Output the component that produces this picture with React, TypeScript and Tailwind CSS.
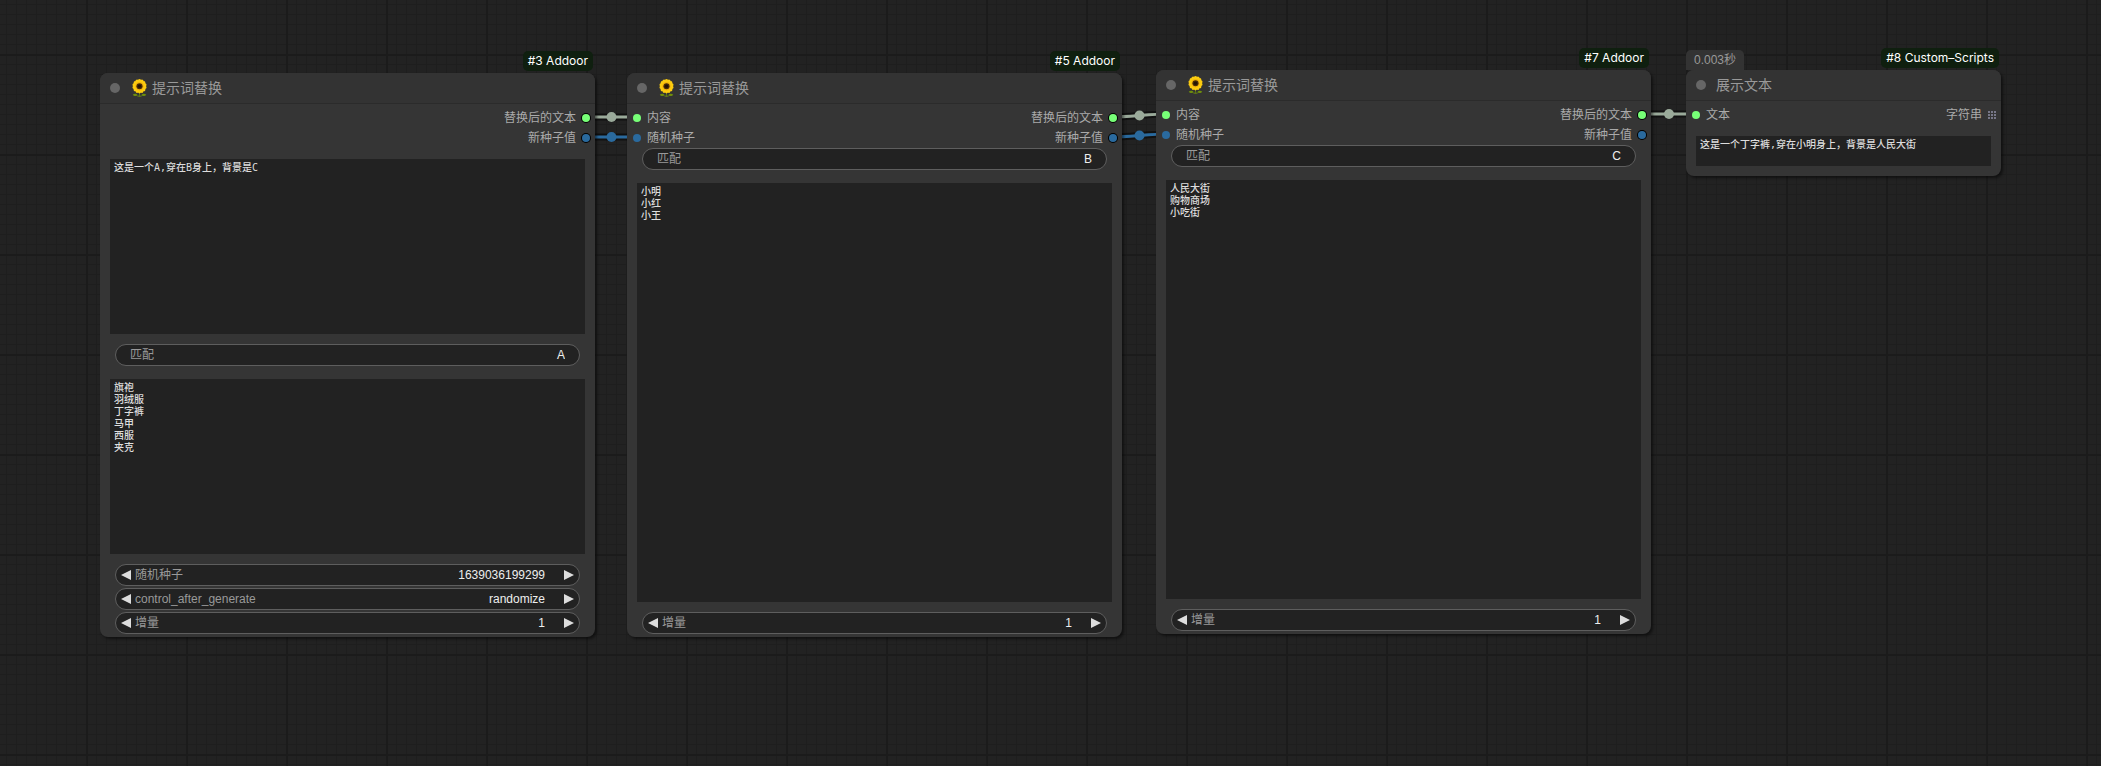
import { useState, type ReactNode } from "react";

const SANS = "font-['Liberation_Sans','Noto_Sans_CJK_SC',sans-serif]";

function Sunflower() {
  const petals = Array.from({ length: 14 }, (_, i) => (i * 360) / 14);
  return (
    <svg viewBox="0 0 32 40" className="h-[18px] w-[15px] shrink-0" aria-hidden="true">
      <path d="M15 27h2v10h-2z" fill="#5f7a12" />
      <path d="M1 35c3-3 8-3 11 1-3 3-9 2-11-1zM31 35c-3-3-8-3-11 1 3 3 9 2 11-1zM10 38c3-2 9-2 12 0-3 2-9 2-12 0z" fill="#6f8f0c" />
      {petals.map((a) => (
        <ellipse key={a} cx="16" cy="5.5" rx="3.9" ry="5.5" fill="#fccc10" transform={`rotate(${a} 16 16)`} />
      ))}
      <circle cx="16" cy="16" r="9.5" fill="#f5b60a" />
      <circle cx="16" cy="16" r="6.8" fill="#4a2c08" />
      <circle cx="16" cy="16" r="4" fill="#241404" />
    </svg>
  );
}

function IdBadge({ children }: { children: ReactNode }) {
  return (
    <span className="absolute right-[2px] bottom-full mb-[2px] rounded-[5px] bg-[#0f1f0f] px-[5px] font-[Inter,sans-serif] text-[12px] leading-[20px] whitespace-nowrap text-white">
      {children}
    </span>
  );
}

type Slot = { name: string; color: "green" | "blue" | "grid" };

function Port({ color, output }: { color: Slot["color"]; output?: boolean }) {
  if (color === "grid") {
    return (
      <svg viewBox="0 0 8 8" className="size-[8px]" fill="#778" aria-hidden="true">
        {[0, 3, 6].map((y) => [0, 3, 6].map((x) => <rect key={`${x}-${y}`} x={x} y={y} width="2" height="2" />))}
      </svg>
    );
  }
  const fill = color === "green" ? "bg-[#77ff77]" : "bg-[#2a6a9e]";
  return (
    <span className={`size-[8px] rounded-full ${fill} ${output ? "ring-1 ring-black" : ""}`} />
  );
}

function Slots({ inputs, outputs }: { inputs: Slot[]; outputs: Slot[] }) {
  return (
    <div className="flex justify-between pt-[4px] pr-[5px] pl-[6px] text-[12px] leading-[20px] text-[#aaa]">
      <ul>
        {inputs.map((s) => (
          <li key={s.name} className="flex items-center gap-[6px]">
            <Port color={s.color} />
            {s.name}
          </li>
        ))}
      </ul>
      <ul>
        {outputs.map((s) => (
          <li key={s.name} className="flex items-center justify-end gap-[6px]">
            {s.name}
            <Port color={s.color} output />
          </li>
        ))}
      </ul>
    </div>
  );
}

function Node({
  place,
  title,
  icon,
  badge,
  timing,
  children,
}: {
  place: string;
  title: string;
  icon?: boolean;
  badge: string;
  timing?: string;
  children: ReactNode;
}) {
  return (
    <section className={`absolute rounded-[8px] bg-[#353535] shadow-[2px_2px_3px_rgba(0,0,0,0.5)] ${place}`}>
      {timing && (
        <span className="absolute bottom-full left-0 rounded-t-[5px] bg-[#333] px-[8px] text-[12px] leading-[20px] whitespace-nowrap text-[#999]">
          {timing}
        </span>
      )}
      <IdBadge>{badge}</IdBadge>
      <header className="flex h-[31px] items-center rounded-t-[8px] border-b border-[#2b2b2b] bg-[#333] pl-[10px]">
        <span className="size-[10px] rounded-full bg-[#666]" />
        <h2 className="flex items-center gap-[5px] pl-[10px] text-[14px] leading-[20px] text-[#999]">
          {icon && (
            <span className="pl-[2px]">
              <Sunflower />
            </span>
          )}
          {title}
        </h2>
      </header>
      {children}
    </section>
  );
}

function TextBlock({ label, text, size }: { label: string; text: string; size: string }) {
  const [value, setValue] = useState(text);
  return (
    <div className="px-[10px]">
      <textarea
        aria-label={label}
        value={value}
        onChange={(e) => setValue(e.target.value)}
        spellCheck={false}
        className={`block w-full resize-none overflow-hidden bg-[#222] px-[4px] py-[3px] font-['DejaVu_Sans_Mono','Noto_Sans_CJK_SC',monospace] text-[10px] leading-[12px] font-medium text-[#ddd] outline-none ${size}`}
      />
    </div>
  );
}

const PILL = "mx-[15px] flex h-[22px] items-center rounded-full border border-[#5e5e5e] bg-[#222] text-[12px] leading-[20px]";

function TextPill({ id, label, text }: { id: string; label: string; text: string }) {
  const [value, setValue] = useState(text);
  return (
    <div className={`${PILL} px-[14px]`}>
      <label htmlFor={id} className="shrink-0 text-[#999]">
        {label}
      </label>
      <input
        id={id}
        value={value}
        onChange={(e) => setValue(e.target.value)}
        className="min-w-0 flex-1 bg-transparent text-right text-[#eee] outline-none"
      />
    </div>
  );
}

function Arrow({ label, d, onClick }: { label: string; d: string; onClick: () => void }) {
  return (
    <button type="button" aria-label={label} onClick={onClick} className="shrink-0">
      <svg viewBox="0 0 10 10" className="size-[10px]" fill="#ddd" aria-hidden="true">
        <path d={d} />
      </svg>
    </button>
  );
}

function StepPill({ id, label, start, options }: { id: string; label: string; start: string; options?: string[] }) {
  const [value, setValue] = useState(start);
  const step = (by: number) => {
    if (options) {
      const next = options[options.indexOf(value) + by];
      if (next) setValue(next);
    } else {
      setValue(String(Number(value) + by));
    }
  };
  return (
    <div className={`${PILL} px-[5px]`}>
      <Arrow label={`${label} -`} d="M10 0v10L0 5z" onClick={() => step(-1)} />
      <label htmlFor={id} className="shrink-0 pl-[4px] text-[#999]">
        {label}
      </label>
      {options ? (
        <select
          id={id}
          value={value}
          onChange={(e) => setValue(e.target.value)}
          className="min-w-0 flex-1 appearance-none bg-transparent pr-[19px] text-right text-[#eee] outline-none [text-align-last:right]"
        >
          {options.map((o) => (
            <option key={o}>{o}</option>
          ))}
        </select>
      ) : (
        <input
          id={id}
          value={value}
          inputMode="numeric"
          onChange={(e) => setValue(e.target.value)}
          className="min-w-0 flex-1 bg-transparent pr-[19px] text-right text-[#eee] outline-none"
        />
      )}
      <Arrow label={`${label} +`} d="M0 0v10l10-5z" onClick={() => step(1)} />
    </div>
  );
}

const LINKS = [
  { x1: 586, y1: 117, x2: 637, y2: 117, color: "#9aaa9a" },
  { x1: 586, y1: 137, x2: 637, y2: 137, color: "#2a6a9e" },
  { x1: 1113, y1: 117, x2: 1166, y2: 114, color: "#9aaa9a" },
  { x1: 1113, y1: 137, x2: 1166, y2: 134, color: "#2a6a9e" },
  { x1: 1642, y1: 114, x2: 1696, y2: 114, color: "#9aaa9a" },
];

function Links() {
  return (
    <svg className="absolute inset-0 size-full" fill="none" aria-hidden="true">
      {LINKS.map(({ x1, y1, x2, y2, color }) => {
        const d = `M${x1} ${y1}C${x1 + 13} ${y1} ${x2 - 13} ${y2} ${x2} ${y2}`;
        return (
          <g key={`${x1}-${y1}`}>
            <path d={d} stroke="#000" strokeOpacity="0.5" strokeWidth="7" />
            <path d={d} stroke={color} strokeWidth="3" />
            <circle cx={(x1 + x2) / 2} cy={(y1 + y2) / 2} r="5" fill={color} />
          </g>
        );
      })}
    </svg>
  );
}

const IN: Slot[] = [
  { name: "内容", color: "green" },
  { name: "随机种子", color: "blue" },
];
const OUT: Slot[] = [
  { name: "替换后的文本", color: "green" },
  { name: "新种子值", color: "blue" },
];

function ReplaceNode({ n, place, match, words }: { n: number; place: string; match: string; words: string }) {
  return (
    <Node place={place} title="提示词替换" icon badge={`#${n} Addoor`}>
      <Slots inputs={IN} outputs={OUT} />
      <TextPill id={`match-${n}`} label="匹配" text={match} />
      <div className="pt-[13px] pb-[10px]">
        <TextBlock label="替换词" text={words} size="h-[419px]" />
      </div>
      <div className="pb-[3px]">
        <StepPill id={`step-${n}`} label="增量" start="1" />
      </div>
    </Node>
  );
}

export default function App() {
  return (
    <main
      className={`relative min-h-screen overflow-hidden bg-[#222] bg-[linear-gradient(to_right,#1b1b1b_2px,transparent_2px),linear-gradient(to_bottom,#1b1b1b_2px,transparent_2px),linear-gradient(to_right,#1e1e1e_1px,transparent_1px),linear-gradient(to_bottom,#1e1e1e_1px,transparent_1px)] bg-[size:100px_100px,100px_100px,10px_10px,10px_10px] bg-[position:86px_54px,86px_54px,6px_4px,6px_4px] ${SANS}`}
    >
      <Links />

      <Node place="left-[100px] top-[73px] w-[495px]" title="提示词替换" icon badge="#3 Addoor">
        <Slots inputs={[]} outputs={OUT} />
        <div className="flex flex-col gap-[10px] pt-[11px] pb-[3px]">
          <TextBlock label="内容" text="这是一个A,穿在B身上，背景是C" size="h-[175px]" />
          <TextPill id="match-3" label="匹配" text="A" />
          <div className="pt-[3px]">
            <TextBlock label="替换词" text={"旗袍\n羽绒服\n丁字裤\n马甲\n西服\n夹克"} size="h-[175px]" />
          </div>
          <div className="flex flex-col gap-[2px]">
            <StepPill id="seed-3" label="随机种子" start="1639036199299" />
            <StepPill
              id="control-3"
              label="control_after_generate"
              start="randomize"
              options={["fixed", "increment", "decrement", "randomize"]}
            />
            <StepPill id="step-3" label="增量" start="1" />
          </div>
        </div>
      </Node>

      <ReplaceNode n={5} place="left-[627px] top-[73px] w-[495px]" match="B" words={"小明\n小红\n小王"} />
      <ReplaceNode n={7} place="left-[1156px] top-[70px] w-[495px]" match="C" words={"人民大街\n购物商场\n小吃街"} />

      <Node place="left-[1686px] top-[70px] w-[315px]" title="展示文本" badge="#8 Custom–Scripts" timing="0.003秒">
        <Slots inputs={[{ name: "文本", color: "green" }]} outputs={[{ name: "字符串", color: "grid" }]} />
        <div className="pt-[11px] pb-[10px]">
          <TextBlock label="文本" text="这是一个丁字裤,穿在小明身上，背景是人民大街" size="h-[30px]" />
        </div>
      </Node>
    </main>
  );
}
